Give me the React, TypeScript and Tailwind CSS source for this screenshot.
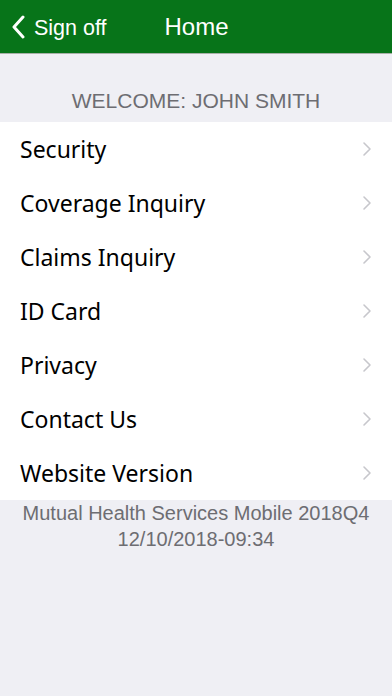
const items = [
  "Security",
  "Coverage Inquiry",
  "Claims Inquiry",
  "ID Card",
  "Privacy",
  "Contact Us",
  "Website Version",
]

const Chevron = () => (
  <svg width="10" height="16" viewBox="0 0 10 16" fill="none">
    <path d="M2 2l6 6-6 6" stroke="#c7c7cc" strokeWidth="1.6" strokeLinecap="round" strokeLinejoin="round" />
  </svg>
)

const App = () => {
  return (
    <div className="h-[696px] w-[392px] bg-[#efeff4] flex flex-col font-['Liberation_Sans',sans-serif]">
      <div className="h-[54px] bg-[#077419] border-b border-[#a8b0a8] flex items-center">
        <div className="flex items-center pl-[12px] text-white">
          <svg width="14" height="24" viewBox="0 0 14 24" fill="none">
            <path d="M11 2L2 12l9 10" stroke="white" strokeWidth="3" strokeLinecap="round" strokeLinejoin="round" />
          </svg>
          <span className="ml-[8px] pt-[3px] text-[21.5px]">Sign off</span>
        </div>
        <span className="ml-[58px] text-white text-[24px]">Home</span>
      </div>
      <div className="h-[68px] flex items-end justify-center pb-[6px]">
        <span className="text-[21px] text-[#6d6d72]">WELCOME: JOHN SMITH</span>
      </div>
      <div className="bg-white flex flex-col">
        {items.map((item) => (
          <div key={item} className="h-[54px] flex items-center justify-between pl-[20px] pr-[20px]">
            <span className="text-[23px] text-black font-['Noto_Sans',sans-serif]">{item}</span>
            <Chevron />
          </div>
        ))}
      </div>
      <div className="flex flex-col items-center text-[20px] leading-[26px] text-[#6d6d72]">
        <span>Mutual Health Services Mobile 2018Q4</span>
        <span>12/10/2018-09:34</span>
      </div>
    </div>
  )
}

export default App
